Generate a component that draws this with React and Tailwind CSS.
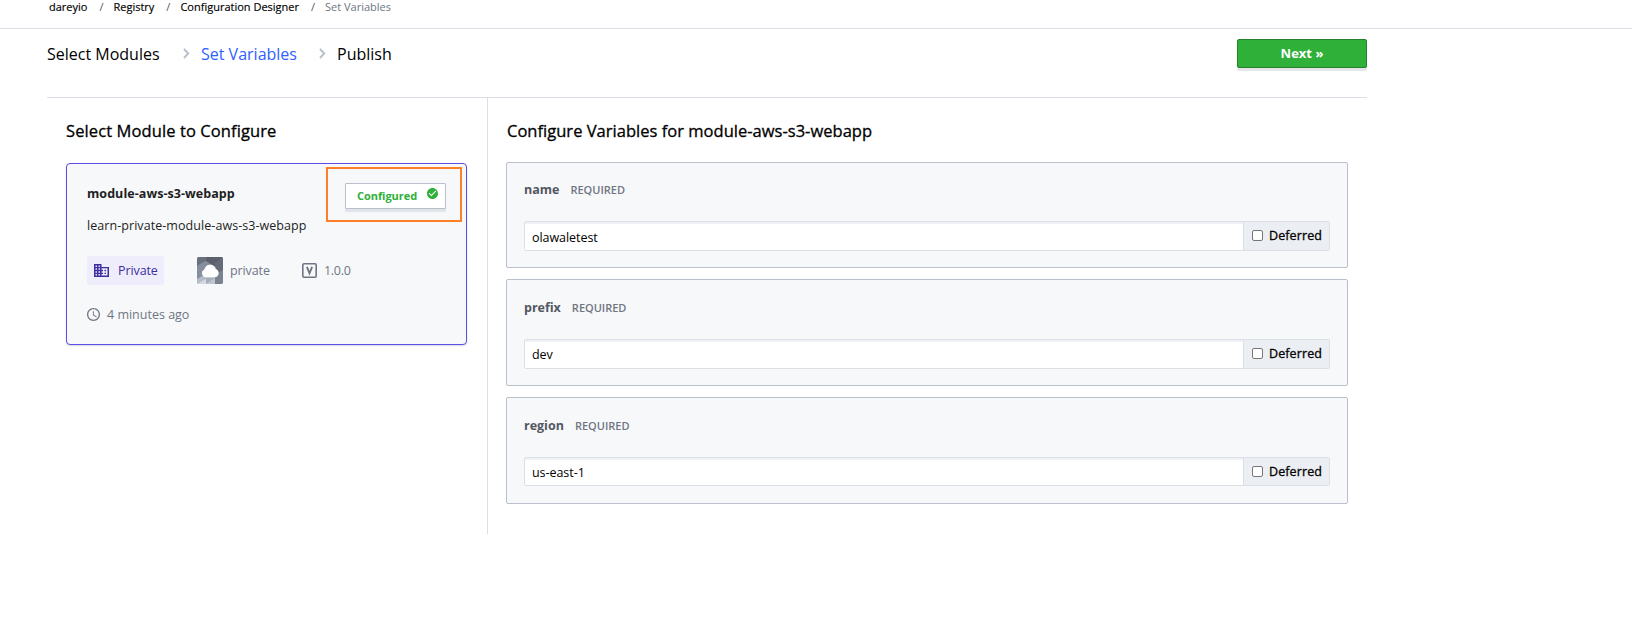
import React from "react";

const Chevron = () => (
  <svg className="h-[11px] w-[7px]" viewBox="0 0 7 11" fill="none" stroke="#bac1cc" strokeWidth="2">
    <path d="M1 1 5.2 5.5 1 10" />
  </svg>
);

const Domain = () => (
  <svg className="h-[13px] w-[15px]" viewBox="2 3 20 18" preserveAspectRatio="none" fill="#3d2f9e">
    <path d="M12 7V3H2v18h20V7H12zM6 19H4v-2h2v2zm0-4H4v-2h2v2zm0-4H4V9h2v2zm0-4H4V5h2v2zm4 12H8v-2h2v2zm0-4H8v-2h2v2zm0-4H8V9h2v2zm0-4H8V5h2v2zm10 12h-8v-2h2v-2h-2v-2h2v-2h-2V9h8v10zm-2-8h-2v2h2v-2zm0 4h-2v2h2v-2z" />
  </svg>
);

const Clock = () => (
  <svg className="mb-px h-[13px] w-[13px]" viewBox="2 2 20 20" fill="#6f7682">
    <path d="M11.99 2C6.47 2 2 6.48 2 12s4.47 10 9.99 10C17.52 22 22 17.52 22 12S17.52 2 11.99 2zM12 20c-4.42 0-8-3.58-8-8s3.58-8 8-8 8 3.58 8 8-3.58 8-8 8zm.5-13H11v6l5.25 3.15.75-1.23-4.5-2.67z" />
  </svg>
);

const CheckCircle = () => (
  <svg className="h-[11px] w-[11px]" viewBox="2 2 20 20" fill="#2eb039">
    <path d="M12 2C6.48 2 2 6.48 2 12s4.48 10 10 10 10-4.48 10-10S17.52 2 12 2zm-2 15-5-5 1.41-1.41L10 14.17l7.59-7.59L19 8l-9 9z" />
  </svg>
);

const CloudAvatar = () => (
  <svg className="h-[27px] w-[26px] rounded-[2px]" viewBox="0 0 26 27">
    <rect width="26" height="27" fill="#858d9b" />
    <path d="M0 0H9V4L0 9Z" fill="#6a717e" />
    <path d="M9 0H26V15L18 10 9 4Z" fill="#5a606c" />
    <path d="M18 6 26 0V15L18 19Z" fill="#656b77" />
    <path d="M0 9 9 4V18L0 22Z" fill="#868f9d" />
    <path d="M0 22 9 17V27H0Z" fill="#b5bcc8" />
    <path d="M0 27 9 22V27Z" fill="#d5dae1" />
    <path d="M9 17H18V27H9Z" fill="#a5adba" />
    <path d="M9 27 18 21V27Z" fill="#c0c6d0" />
    <path d="M18 18 26 13V27H18Z" fill="#7b8391" />
    <path d="M8.6 20A3.9 3.900 0 0 1 7.800 12.500A5.500 5.500 0 0 1 18.500 12.200A4 4 0 0 1 17.800 20Z" fill="#fff" stroke="#fff" strokeWidth="0.8" />
  </svg>
);

const variables = [
  { name: "name", value: "olawaletest", card: "h-[106px] pt-[17px]", field: "mt-[21px] h-[30px]", line: "leading-[31px]" },
  { name: "prefix", value: "dev", card: "mt-[11px] h-[107px] pt-[18px]", field: "mt-[21px] h-[30px]", line: "leading-[29px]" },
  { name: "region", value: "us-east-1", card: "mt-[11px] h-[107px] pt-[18px]", field: "mt-[21px] h-[29px]", line: "leading-[29px]" },
];

function Variable({ name, value, card, field, line }) {
  return (
    <section className={`${card} rounded-[2px] border border-[#bac1cc] bg-[#f7f8fa] px-[17px]`}>
      <div className="flex h-5 items-center leading-5">
        <span className="text-[12.5px] font-bold text-[#525761]">{name}</span>
        <span className="ml-[11px] text-[11px] font-semibold text-[#6f7682]">REQUIRED</span>
      </div>
      <div className={`${field} flex rounded-[2px] border border-[#dce0e6]`}>
        <div className={`${line} flex-1 overflow-hidden bg-white pl-[7px] text-[12.5px] tracking-[-0.05px] shadow-[inset_0_2px_1px_#f0f1f4]`}>
          {value}
        </div>
        <label className="flex w-[86px] items-center border-l border-[#dce0e6] bg-[#ebeef2] pl-2">
          <span className="mb-px h-[11px] w-[11px] rounded-[2px] border border-[#767676] bg-white" />
          <span className="ml-[6px] pt-px text-[12.5px] tracking-[0.1px] [-webkit-text-stroke:0.3px_black]">Deferred</span>
        </label>
      </div>
    </section>
  );
}

const crumbs = ["dareyio", "Registry", "Configuration Designer"];

export default function App() {
  return (
    <div className="h-[634px] overflow-hidden bg-white font-['Open_Sans',sans-serif] text-black">
      <nav className="flex h-[29px] border-b border-[#dce0e6] pl-[49px] text-[11px] leading-[14px]">
        {crumbs.map((c) => (
          <React.Fragment key={c}>
            <span className="[-webkit-text-stroke:0.15px_black]">{c}</span>
            <span className="mr-[10px] ml-3 text-[#525761]">/</span>
          </React.Fragment>
        ))}
        <span className="text-[#6f7682]">Set Variables</span>
      </nav>
      <main className="ml-[47px] w-[1320px]">
        <header className="flex h-[69px] border-b border-[#dce0e6] pt-[10px]">
          <div className="flex h-[29px] items-center text-[16px] leading-[31px]">
            <span className="w-[136px] pt-px">Select Modules</span>
            <Chevron />
            <span className="ml-[11px] w-[118px] pt-px text-[#2e61ff]">Set Variables</span>
            <Chevron />
            <span className="ml-[11px] pt-px">Publish</span>
          </div>
          <button className="ml-auto h-[29px] w-[130px] rounded-[2px] border border-[#25812b] bg-[#2eb039] text-[13px] leading-[27px] font-bold text-white shadow-[0_3px_1px_#e4e5e9]">
            Next »
          </button>
        </header>
        <div className="flex">
          <aside className="h-[436px] w-[441px] border-r border-[#dce0e6] pt-[23px] pl-[19px]">
            <h2 className="h-[42px] text-[16.5px] leading-5 tracking-[0.1px] [-webkit-text-stroke:0.3px_black]">
              Select Module to Configure
            </h2>
            <article className="relative h-[182px] w-[401px] rounded-[4px] border border-[#5c4ee5] bg-[#f7f8fa] px-[20px] pt-[19px] text-[12.5px] leading-5 text-[#6f7682] shadow-[0_1px_2px_#d5d8de]">
              <div className="flex h-5 items-start">
                <h3 className="pt-px font-bold tracking-[0.06px] text-[#1d1f23]">module-aws-s3-webapp</h3>
                <div className="ml-auto flex h-[26px] w-[101px] shrink-0 rounded-[1px] border border-[#bac1cc] bg-white pl-[11px] shadow-[0_3px_1px_#e0e3e8]">
                  <span className="text-[11px] leading-6 font-bold tracking-[-0.05px] text-[#2eb039]">Configured</span>
                  <span className="mt-[4px] ml-[10px]">
                    <CheckCircle />
                  </span>
                </div>
              </div>
              <p className="mt-[13px] tracking-[0.06px] text-[#1d1f23]">learn-private-module-aws-s3-webapp</p>
              <div className="mt-[20px] flex h-[29px] items-center">
                <div className="flex h-[29px] w-[77px] items-center rounded-[3px] bg-[#efedfc] pl-[7px] text-[#3d2f9e]">
                  <Domain />
                  <span className="ml-[9px] pt-px tracking-[-0.1px]">Private</span>
                </div>
                <div className="ml-[33px] flex w-[105px] items-center">
                  <CloudAvatar />
                  <span className="ml-[7px] pt-px tracking-[-0.1px]">private</span>
                </div>
                <svg className="h-[15px] w-[15px]" viewBox="0 0 15 15">
                  <rect x="0.8" y="0.8" width="13.4" height="13.4" rx="1.2" fill="none" stroke="#6f7682" strokeWidth="1.6" />
                  <path d="M4.900 3.900 7.500 10.300 10.100 3.900" fill="none" stroke="#6f7682" strokeWidth="1.900" />
                </svg>
                <span className="ml-[7px] pt-px tracking-[-0.3px]">1.0.0</span>
              </div>
              <div className="mt-[20px] flex h-5 items-center">
                <Clock />
                <span className="ml-[7px]">4 minutes ago</span>
              </div>
              <div className="absolute top-[3px] left-[259px] h-[55px] w-[136px] border-2 border-[#ff7f27]" />
            </article>
          </aside>
          <section className="flex-1 pt-[23px] pr-[19px] pl-[18px]">
            <h2 className="h-[41px] pl-px text-[16.5px] leading-5 tracking-[0.02px] [-webkit-text-stroke:0.3px_black]">
              Configure Variables for module-aws-s3-webapp
            </h2>
            {variables.map((v) => (
              <Variable key={v.name} {...v} />
            ))}
          </section>
        </div>
      </main>
    </div>
  );
}
